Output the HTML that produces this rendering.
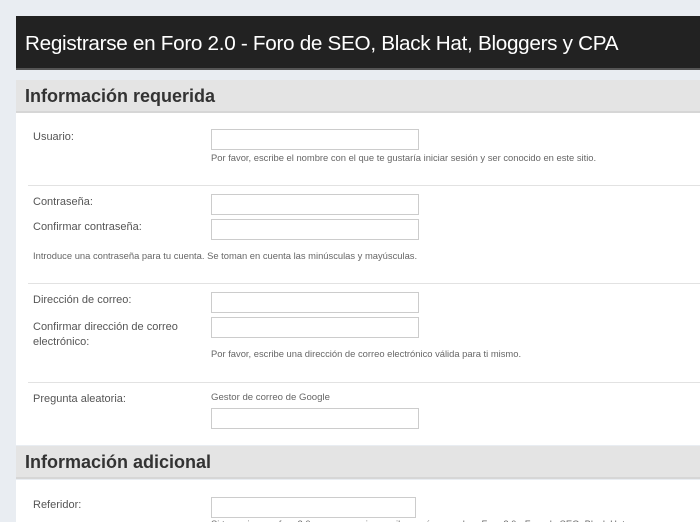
<!DOCTYPE html>
<html><head><meta charset="utf-8"><style>
html,body{margin:0;width:700px;height:522px;overflow:hidden}
body{background:#e9edf2;font-family:"Liberation Sans",sans-serif;position:relative}
.a{position:absolute;white-space:nowrap}
.hdr{left:16px;top:16px;width:684px;height:54px;background:#222;border-bottom:2px solid #555;color:#fff;font-size:20.7px;line-height:56px;box-sizing:border-box;padding-left:9px;letter-spacing:-0.3px}
.sec{left:16px;width:684px;height:33px;background:#e4e4e4;border-bottom:2px solid #d6d6d6;box-sizing:border-box;color:#333;font-weight:bold;font-size:18px;padding-left:9px;line-height:32px}
.body{left:16px;top:113px;width:684px;height:332px;background:#fff}
.body2{left:16px;top:480px;width:684px;height:42px;background:#fff}
.lbl{font-size:11px;color:#555;left:33px}
.in{left:211px;width:206px;height:19px;border:1px solid #ccc;background:#fff}
.hint{font-size:9.4px;color:#666;left:211px}
.sep{left:28px;width:672px;height:1px;background:#e2e2e2}
</style></head><body>
<div class="a hdr">Registrarse en Foro 2.0 - Foro de SEO, Black Hat, Bloggers y CPA</div>
<div class="a sec" style="top:80px">Información requerida</div>
<div class="a body"></div>
<div class="a lbl" style="top:131px">Usuario:</div>
<div class="a in" style="top:129px"></div>
<div class="a hint" style="top:152px">Por favor, escribe el nombre con el que te gustaría iniciar sesión y ser conocido en este sitio.</div>
<div class="a sep" style="top:185px"></div>
<div class="a lbl" style="top:196px">Contraseña:</div>
<div class="a in" style="top:194px"></div>
<div class="a lbl" style="top:221px">Confirmar contraseña:</div>
<div class="a in" style="top:219px"></div>
<div class="a hint" style="left:33px;top:250px">Introduce una contraseña para tu cuenta. Se toman en cuenta las minúsculas y mayúsculas.</div>
<div class="a sep" style="top:283px"></div>
<div class="a lbl" style="top:294px">Dirección de correo:</div>
<div class="a in" style="top:292px"></div>
<div class="a lbl" style="top:320px;line-height:15px">Confirmar dirección de correo<br>electrónico:</div>
<div class="a in" style="top:317px"></div>
<div class="a hint" style="top:348px">Por favor, escribe una dirección de correo electrónico válida para ti mismo.</div>
<div class="a sep" style="top:382px"></div>
<div class="a lbl" style="top:393px">Pregunta aleatoria:</div>
<div class="a hint" style="top:392px;font-size:9.6px">Gestor de correo de Google</div>
<div class="a in" style="top:408px"></div>
<div class="a sec" style="top:446px">Información adicional</div>
<div class="a body2"></div>
<div class="a lbl" style="top:499px">Referidor:</div>
<div class="a in" style="top:497px;width:203px"></div>
<div class="a hint" style="top:518px">Si te enviaron a foro 2.0 por un usuario, escribe aquí su nombre. Foro 2.0 - Foro de SEO, Black Hat</div>
</body></html>
